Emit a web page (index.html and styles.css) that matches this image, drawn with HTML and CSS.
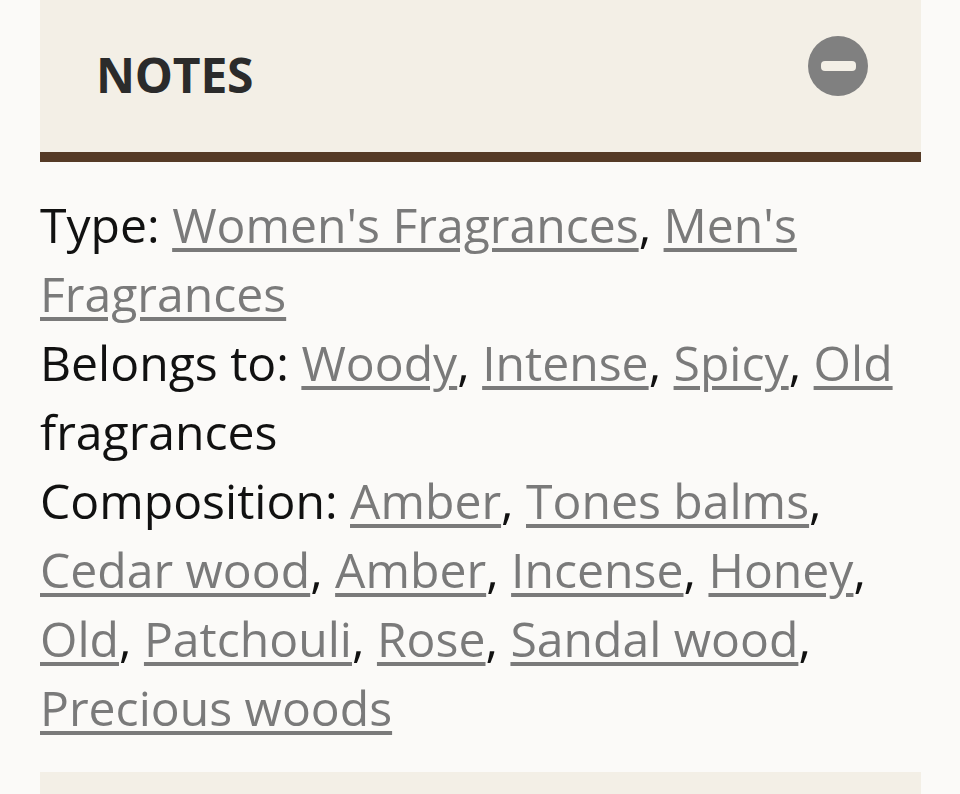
FILE: index.html
```html
<!DOCTYPE html>
<html lang="en">
<head>
<meta charset="utf-8">
<title>Notes</title>
<link rel="stylesheet" href="styles.css">
</head>
<body>
<section class="panel">
  <header class="panel-head">
    <h2 class="panel-title">NOTES</h2>
    <span class="toggle" aria-label="Collapse">
      <svg width="60" height="60" viewBox="0 0 60 60"><circle cx="30" cy="30" r="30" fill="#808080"/><rect x="13" y="25" width="35" height="10" rx="4" fill="#f3efe6"/></svg>
    </span>
  </header>
  <div class="panel-body">
    <p class="line">Type: <a href="#">Women's Fragrances</a>, <a href="#">Men's Fragrances</a></p>
    <p class="line">Belongs to: <a href="#">Woody</a>, <a href="#">Intense</a>, <a href="#">Spicy</a>, <a href="#">Old</a> fragrances</p>
    <p class="line">Composition: <a href="#">Amber</a>, <a href="#">Tones balms</a>, <a href="#">Cedar wood</a>, <a href="#">Amber</a>, <a href="#">Incense</a>, <a href="#">Honey</a>, <a href="#">Old</a>, <a href="#">Patchouli</a>, <a href="#">Rose</a>, <a href="#">Sandal wood</a>, <a href="#">Precious woods</a></p>
  </div>
</section>
<section class="panel next">
  <div class="panel-head short"></div>
</section>
</body>
</html>
```
FILE: styles.css
```css
html, body {
  margin: 0;
  padding: 0;
  background: #fbfaf8;
}
body {
  padding: 0 39px 0 40px;
  font-family: "Open Sans", sans-serif;
  color: #111;
  overflow: hidden;
  height: 794px;
}
.panel-head {
  background: #f3efe6;
  height: 152px;
  border-bottom: 10px solid #553a26;
  display: flex;
  align-items: center;
  justify-content: space-between;
  padding: 0 53px 0 56px;
}
.panel-title {
  margin: -3px 0 0;
  font-size: 48px;
  font-weight: 700;
  color: #2b2b2b;
  line-height: 1;
  letter-spacing: -0.2px;
}
.toggle {
  display: flex;
  width: 60px;
  height: 60px;
  margin-top: -20px;
}
.panel-body {
  padding: 28px 0 30px;
}
.line {
  margin: 0;
  font-size: 48.1px;
  line-height: 69px;
}
.line a {
  color: #7a7a7a;
  text-decoration: underline;
  text-decoration-thickness: 4px;
  text-underline-offset: 5px;
}
.next .panel-head.short {
  height: 40px;
  border-bottom: 0;
}
```
